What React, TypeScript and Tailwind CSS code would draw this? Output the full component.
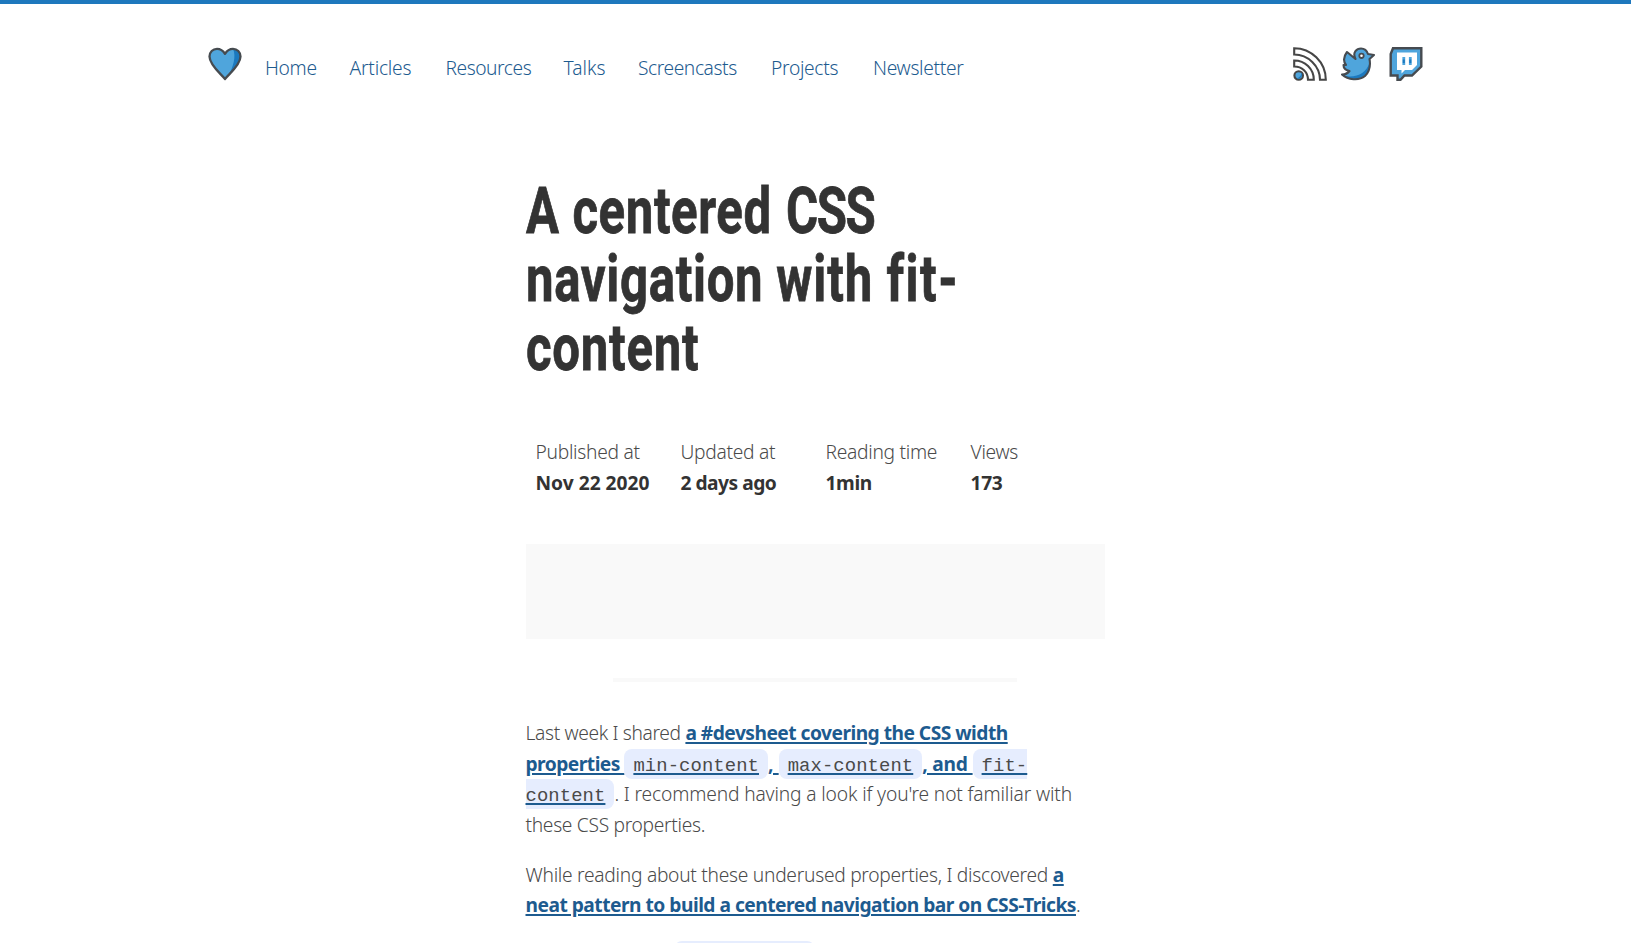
const nav = [
  { label: "Home", cls: "w-[84.5px] tracking-[-0.3px]" },
  { label: "Articles", cls: "w-[96px] tracking-[-0.2px]" },
  { label: "Resources", cls: "w-[118px] tracking-[-0.45px]" },
  { label: "Talks", cls: "w-[74.5px]" },
  { label: "Screencasts", cls: "w-[133px] tracking-[-0.42px]" },
  { label: "Projects", cls: "w-[102px] tracking-[-0.3px]" },
  { label: "Newsletter", cls: "w-[100px] tracking-[-0.3px]" },
];

const meta = [
  { label: "Published at", value: "Nov 22 2020", cls: "tracking-normal" },
  { label: "Updated at", value: "2 days ago", cls: "tracking-[-0.5px]" },
  { label: "Reading time", value: "1min", cls: "tracking-[-0.4px]" },
  { label: "Views", value: "173", cls: "tracking-[-0.3px]" },
];

const link = "font-bold text-[#1d5b8f] underline decoration-2 underline-offset-[2px]";
const code =
  "rounded-[8px] bg-[#e6edfe] px-[9px] pt-[6px] pb-[2px] font-['Liberation_Mono',monospace] text-[18.9px] leading-[0] font-normal tracking-[0.08px] text-[#4a4a4a]";

function Heart() {
  return (
    <svg className="block h-[34px] w-[34px]" viewBox="0 0 34 34">
      <path d="M17 32C13 27 1.500 18 1.500 9.500C1.500 5 4.800 1.800 9 1.800C12.500 1.800 15 3.500 17 6.800C19 3.500 21.500 1.800 25 1.800C29.200 1.800 32.500 5 32.500 9.500C32.500 18 21 27 17 32Z" fill="#4fa5dc" />
      <path d="M25 2C29 1.500 32.500 5 32.500 9.500C32.500 15 27 22 21 28C25 20 28.500 9 25 2Z" fill="#1b79bf" />
      <path d="M17 32C13 27 1.500 18 1.500 9.500C1.500 5 4.800 1.800 9 1.800C12.500 1.800 15 3.500 17 6.800C19 3.500 21.500 1.800 25 1.800C29.200 1.800 32.500 5 32.500 9.500C32.500 18 21 27 17 32Z" fill="none" stroke="#464b50" strokeWidth="2.3" strokeLinejoin="round" />
    </svg>
  );
}

function Rss() {
  return (
    <svg className="block h-[34px] w-[34px]" viewBox="0 0 34 34" fill="none" stroke="#464646" strokeWidth="2.1">
      <path d="M1.200 1.200C18 1.200 32.800 15 32.800 32.800H27C27 19 15 7.500 1.200 7.500Z" />
      <path d="M1.200 13.500C12 13.500 20.800 22 20.800 32.800H15C15 25 9 19.500 1.200 19.500Z" />
      <circle cx="5.700" cy="28.500" r="4.300" fill="#4fa5dc" />
      <path d="M8.500 25.500A4 4 0 0 1 4 31.500Q8 30 8.500 25.500Z" fill="#1b79bf" stroke="none" />
    </svg>
  );
}

function Bird() {
  const body =
    "M6 5L14.500 12C11 5 16 1.500 20 1.500C24 1.500 26 4 27 7L33 8L28.500 12C30 20 28 25 24 29C18 34 7 33 1 27.500C5 27.500 7 26 8.500 24C4 23 2.500 20 2.500 18L5 18C2 14 3 9 6 5Z";
  return (
    <svg className="block h-[34px] w-[34px]" viewBox="0 0 34 34" strokeLinejoin="round">
      <path d={body} fill="#4fa5dc" />
      <path d="M28.500 16C29 21 28 25 24 29C18 34 9 32 4 29C16 31 25 26 28.500 16Z" fill="#1b79bf" />
      <path d={body} fill="none" stroke="#464b50" strokeWidth="2.100" />
      <circle cx="20.500" cy="8.800" r="2.200" fill="#fff" stroke="#464b50" strokeWidth="1.800" />
    </svg>
  );
}

function Twitch() {
  return (
    <svg className="block h-[34px] w-[34px]" viewBox="0 0 34 34">
      <path d="M4 1.200H32.300V19.500L23 28.500H15.500L11.500 32.800H8.500V28.500H1.700V7Z" fill="#4fa5dc" stroke="#464b50" strokeWidth="2.400" />
      <path d="M8 5.500H28V18L23 23H16L12.500 26.500V23H8Z" fill="#fff" />
      <path d="M14.800 10V18M21.300 10V18" stroke="#4fa5dc" strokeWidth="2.800" />
      <path d="M14.800 12.500V16M21.300 12.500V16" stroke="#1b79bf" strokeWidth="2" />
    </svg>
  );
}

export default function App() {
  return (
    <div className="h-[943px] overflow-hidden border-t-4 border-[#1e78bd] bg-white font-['Noto_Sans','Open_Sans',sans-serif] text-[19.2px] leading-[30.72px] font-[350] text-[#4a4a4a]">
      <header className="ml-[208px] flex w-[1215px] items-start justify-between pt-[43px]">
        <div className="flex">
          <Heart />
          <nav className="ml-[23px] flex pt-[6px] text-[#1d5b8f]">
            {nav.map((n) => (
              <a key={n.label} className={n.cls}>{n.label}</a>
            ))}
          </nav>
        </div>
        <div className="flex gap-[14px]">
          <Rss />
          <Bird />
          <Twitch />
        </div>
      </header>
      <main className="mx-auto w-[580px]">
        <h1 className="mt-[93px] font-['Roboto',sans-serif] text-[65.5px] leading-[68.4px] font-bold text-[#333] [-webkit-text-stroke:0.8px_#333]">
          <span className="block origin-left scale-x-75 tracking-[0.8px] whitespace-nowrap">
            A centered <span className="ml-[2px] tracking-[-2px]">CSS</span>
          </span>
          <span className="block origin-left scale-x-75 tracking-[0.9px] whitespace-nowrap">
            navigation <span className="tracking-[1.3px]">with </span>
            <span className="tracking-[2px]">fit-</span>
          </span>
          <span className="block origin-left scale-x-75 tracking-[1px] whitespace-nowrap">content</span>
        </h1>
        <dl className="mt-[55px] flex whitespace-nowrap pl-[10px]">
          {meta.map((m) => (
            <div key={m.label} className="w-[145px] shrink-0">
              <dt className="tracking-[-0.28px]">{m.label}</dt>
              <dd className={`font-bold text-[#333] ${m.cls}`}>{m.value}</dd>
            </div>
          ))}
        </dl>
        <div className="mt-[46px] h-[95px] w-[579px] bg-[#f9f9f9]" />
        <div className="ml-[87.5px] mt-[39px] h-1 w-[404px] bg-[#f9f9f9]" />
        <p className="mt-[35.5px] whitespace-nowrap">
          <span className="tracking-[-0.34px]">Last week I shared </span>
          <a className={`${link} tracking-[-0.52px]`}>a #devsheet covering the CSS width<br />
            properties <code className={code}>min-content</code><span className="tracking-[0.1px]">, </span>
            <code className={code}>max-content</code><span className="tracking-[-0.2px]">, and </span>
            <code className={code}>fit-<br />content</code></a>
          <span className="tracking-[-0.14px]">. I recommend having a look if you're not familiar with</span>
          <br />
          <span className="tracking-[-0.3px]">these CSS properties.</span>
        </p>
        <p className="mt-[19px] whitespace-nowrap">
          <span className="tracking-[-0.27px]">While reading about these underused properties, I discovered </span>
          <a className={`${link} tracking-[-0.5px]`}>a<br />
            neat pattern to build a centered navigation bar on CSS-Tricks</a>.
        </p>
        <div className="mt-[19.5px] ml-[148.5px] h-[30px] w-[141px] rounded-[8px] bg-[#e6edfe]" />
      </main>
    </div>
  );
}
